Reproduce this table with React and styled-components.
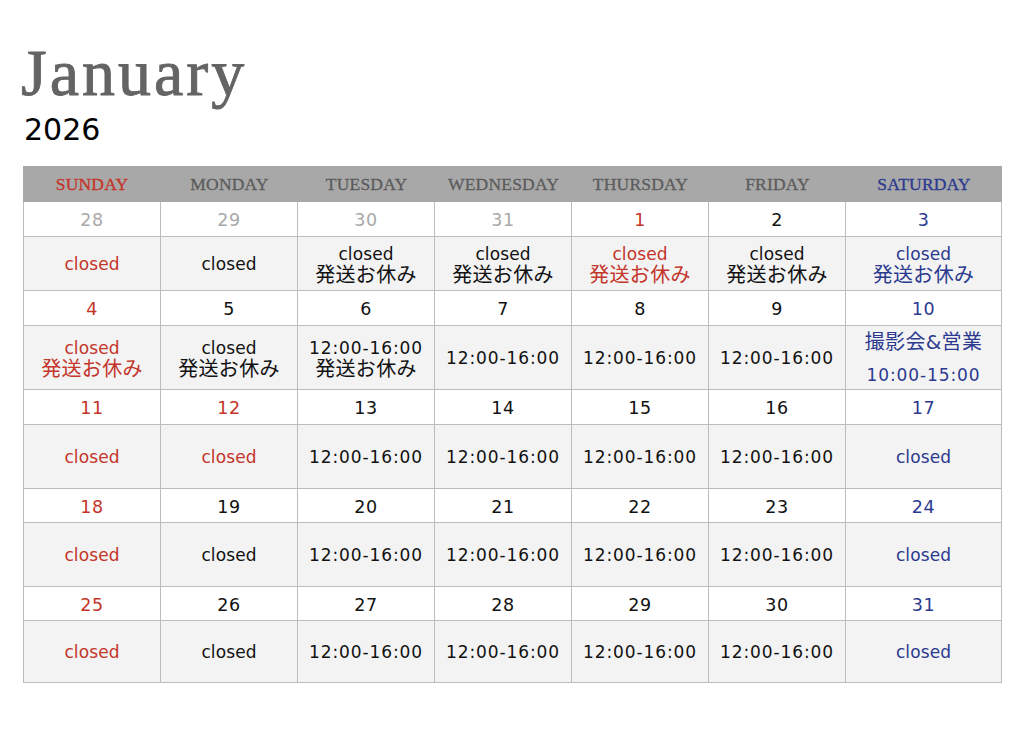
import React from 'react';
import styled, { createGlobalStyle } from 'styled-components';

const GlobalStyle = createGlobalStyle`
  html, body {
    margin: 0;
    padding: 0;
    background: #ffffff;
  }
  * {
    box-sizing: border-box;
  }
`;

const COLORS = {
  red: '#c4352a',
  blue: '#2b3a8f',
  black: '#111111',
  muted: '#a9a9a9',
  head: '#5c5c5c',
  line: '#bcbcbc',
};

const COLUMNS = 'repeat(6, 137px) 156px';

const Page = styled.div`
  width: 1024px;
  height: 739px;
  padding: 37px 0 0 23px;
`;

const TitleBlock = styled.header`
  display: flex;
  flex-direction: column;
  margin-bottom: 19px;
`;

const Month = styled.h1`
  margin: 0 0 0 -2px;
  font-family: 'Liberation Serif', serif;
  font-weight: normal;
  font-size: 66px;
  line-height: 72px;
  letter-spacing: 3px;
  color: #646464;
  -webkit-text-stroke: 0.9px #646464;
`;

const Year = styled.div`
  margin: 4px 0 0 1px;
  font-family: 'DejaVu Sans', sans-serif;
  font-size: 30px;
  line-height: 34px;
  color: #000000;
`;

const Calendar = styled.div`
  width: 979px;
  border-left: 1px solid ${COLORS.line};
`;

const HeadRow = styled.div`
  display: grid;
  grid-template-columns: 138px repeat(5, 137px) 156px;
  height: 36px;
  background: #a8a8a8;
  margin-left: -1px;
`;

const HeadCell = styled.div`
  display: flex;
  align-items: center;
  justify-content: center;
  font-family: 'Liberation Serif', serif;
  font-size: 17.5px;
  letter-spacing: 0.2px;
  color: ${p => COLORS[p.$tone]};
  -webkit-text-stroke: 0.3px ${p => COLORS[p.$tone]};
`;

const Row = styled.div`
  display: grid;
  grid-template-columns: ${COLUMNS};
  height: ${p => p.$h}px;
  background: ${p => (p.$shaded ? '#f3f3f3' : '#ffffff')};
`;

const Cell = styled.div`
  display: flex;
  flex-direction: column;
  align-items: center;
  justify-content: center;
  gap: ${p => (p.$spaced ? '12px' : '0')};
  padding-top: 2px;
  overflow: hidden;
  border-right: 1px solid ${COLORS.line};
  border-bottom: 1px solid ${COLORS.line};
  color: ${p => COLORS[p.$tone]};
  font-family: 'DejaVu Sans', 'Noto Sans CJK JP', sans-serif;
`;

const DateNum = styled.span`
  font-size: 17.5px;
  letter-spacing: 0.6px;
`;

const SIZES = { jp: '20px', time: '17px', text: '17px' };
const SPACING = { jp: '0.3px', time: '0.9px', text: '0.1px' };

const Line = styled.span`
  font-size: ${p => SIZES[p.$kind]};
  line-height: 21px;
  letter-spacing: ${p => SPACING[p.$kind]};
  white-space: nowrap;
`;

const HEADS = [
  ['SUNDAY', 'red'],
  ['MONDAY', 'head'],
  ['TUESDAY', 'head'],
  ['WEDNESDAY', 'head'],
  ['THURSDAY', 'head'],
  ['FRIDAY', 'head'],
  ['SATURDAY', 'blue'],
];

const C = ['closed'];
const CS = ['closed', '発送お休み'];
const T = ['12:00-16:00'];

// [date, date tone, lines, text tone, wide line spacing]
const WEEKS = [
  {
    h: [35, 54],
    days: [
      [28, 'muted', C, 'red'],
      [29, 'muted', C, 'black'],
      [30, 'muted', CS, 'black'],
      [31, 'muted', CS, 'black'],
      [1, 'red', CS, 'red'],
      [2, 'black', CS, 'black'],
      [3, 'blue', CS, 'blue'],
    ],
  },
  {
    h: [35, 64],
    days: [
      [4, 'red', CS, 'red'],
      [5, 'black', CS, 'black'],
      [6, 'black', ['12:00-16:00', '発送お休み'], 'black'],
      [7, 'black', T, 'black'],
      [8, 'black', T, 'black'],
      [9, 'black', T, 'black'],
      [10, 'blue', ['撮影会&営業', '10:00-15:00'], 'blue', true],
    ],
  },
  {
    h: [35, 64],
    days: [
      [11, 'red', C, 'red'],
      [12, 'red', C, 'red'],
      [13, 'black', T, 'black'],
      [14, 'black', T, 'black'],
      [15, 'black', T, 'black'],
      [16, 'black', T, 'black'],
      [17, 'blue', C, 'blue'],
    ],
  },
  {
    h: [34, 64],
    days: [
      [18, 'red', C, 'red'],
      [19, 'black', C, 'black'],
      [20, 'black', T, 'black'],
      [21, 'black', T, 'black'],
      [22, 'black', T, 'black'],
      [23, 'black', T, 'black'],
      [24, 'blue', C, 'blue'],
    ],
  },
  {
    h: [34, 62],
    days: [
      [25, 'red', C, 'red'],
      [26, 'black', C, 'black'],
      [27, 'black', T, 'black'],
      [28, 'black', T, 'black'],
      [29, 'black', T, 'black'],
      [30, 'black', T, 'black'],
      [31, 'blue', C, 'blue'],
    ],
  },
];

const kindOf = s => {
  if (/[^\x00-\x7f]/.test(s)) return 'jp';
  if (/\d/.test(s)) return 'time';
  return 'text';
};

const Week = ({ week }) => (
  <>
    <Row $h={week.h[0]}>
      {week.days.map(([d, tone], i) => (
        <Cell key={i} $tone={tone}>
          <DateNum>{d}</DateNum>
        </Cell>
      ))}
    </Row>
    <Row $h={week.h[1]} $shaded>
      {week.days.map(([, , lines, tone, spaced], i) => (
        <Cell key={i} $tone={tone} $spaced={spaced}>
          {lines.map(l => (
            <Line key={l} $kind={kindOf(l)}>
              {l}
            </Line>
          ))}
        </Cell>
      ))}
    </Row>
  </>
);

export default function App() {
  return (
    <Page>
      <GlobalStyle />
      <TitleBlock>
        <Month>January</Month>
        <Year>2026</Year>
      </TitleBlock>
      <Calendar>
        <HeadRow>
          {HEADS.map(([name, tone]) => (
            <HeadCell key={name} $tone={tone}>
              {name}
            </HeadCell>
          ))}
        </HeadRow>
        {WEEKS.map((w, i) => (
          <Week key={i} week={w} />
        ))}
      </Calendar>
    </Page>
  );
}
